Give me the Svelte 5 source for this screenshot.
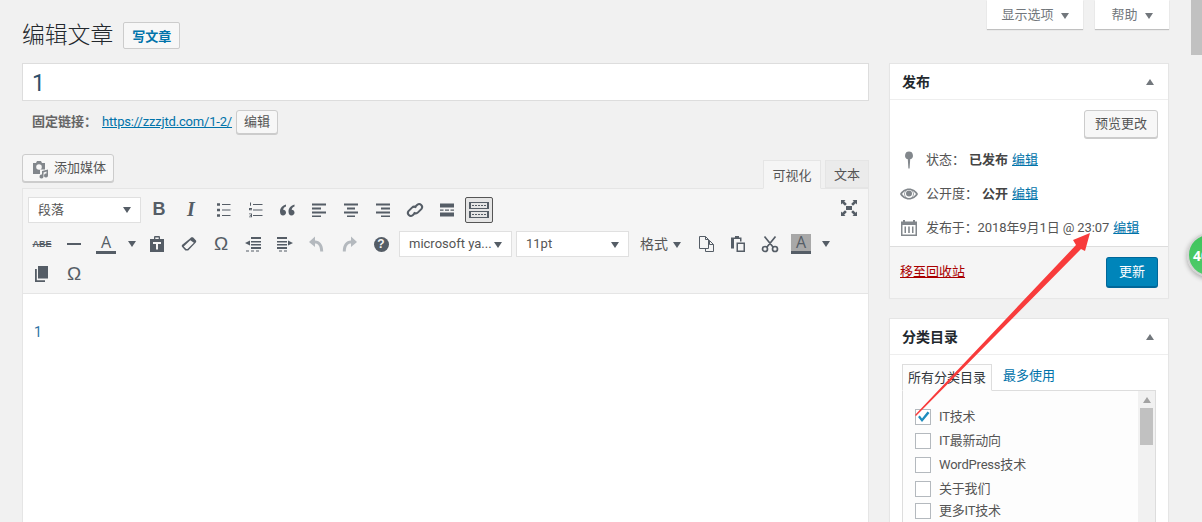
<script>
  const icons = {
    ul: { d: 'M4 3.300h3v2.400H4zM4 8.800h3v2.400H4zM4 14.300h3v2.400H4zM9 3.900h8.500v1.200H9zM9 9.400h8.500v1.200H9zM9 14.900h8.500v1.200H9z' },
    ol: { d: 'M5 2.500h1v3.200H5zM4 8h3v.9H5.100v.4H7v.9H4zM4 13.500h3v3.700H4v-.8h2v-.7H4.800v-.7H6v-.7H4zM8 3.900h9.500v1.200H8zM8 9.400h9.500v1.200H8zM8 14.900h9.500v1.200H8z' },
    quote: { d: 'M9 4.500C5.500 5.500 3 8 3 11.500 3 14 4.200 15.500 6 15.500s3-1.200 3-2.900-1.200-2.800-2.800-2.800c0-1.400 1.200-2.600 2.800-3.200zM17.500 4.500C14 5.500 11.500 8 11.500 11.500c0 2.500 1.200 4 3 4s3-1.200 3-2.900-1.200-2.800-2.800-2.800c0-1.400 1.200-2.600 2.800-3.200z' },
    alignleft: { d: 'M3 3.500h14v2H3zM3 7.500h9v2H3zM3 11.500h14v2H3zM3 15.500h9v1.500H3z' },
    aligncenter: { d: 'M3 3.500h14v2H3zM6 7.500h8v2H6zM3 11.500h14v2H3zM6 15.500h8v1.500H6z' },
    alignright: { d: 'M3 3.500h14v2H3zM8 7.500h9v2H8zM3 11.500h14v2H3zM8 15.500h9v1.500H8z' },
    link: { s: 'M10.500 6.500l1.800-1.800a3 3 0 0 1 4.200 4.200l-3.500 3.500a3 3 0 0 1-4.200 0M9.500 13.500l-1.800 1.800a3 3 0 0 1-4.200-4.200l3.500-3.500a3 3 0 0 1 4.200 0', w: 2 },
    more: { d: 'M3 3.500h14v4H3zM3 9.400h3.500v1.400H3zM8 9.400h4v1.400H8zM13.500 9.400H17v1.400h-3.500zM3 12.500h14v4H3z' },
    fullscreen: { d: 'M7 8h6v4H7zM2 2h4.500L5.200 3.300 7.800 6 6 7.800 3.300 5.200 2 6.500zM18 2v4.500l-1.300-1.300L14 7.800 12.200 6l2.600-2.700L13.500 2zM2 18v-4.500l1.300 1.300L6 12.200 7.800 14l-2.600 2.700L6.500 18zM18 18h-4.500l1.300-1.300L12.200 14l1.800-1.800 2.700 2.600 1.300-1.300z' },
    hr: { d: 'M3 9h14v2H3z' },
    pasteword: { d: 'M3 5h4V3.200C7 2.500 7.500 2 8.200 2h3.600c.7 0 1.200.5 1.200 1.200V5h4v13H3zM8.300 3.400v1.600h3.400V3.400zM6 8v2h3v5.500h2V10h3V8z', e: true },
    eraser: { d: 'M11 4.600l1-1c.6-.6 1.600-.6 2.200 0l2.600 2.600c.6.6.6 1.600 0 2.200L9.200 16.400H6.400L3.200 13c-.6-.6-.6-1.600 0-2.200zM11.300 6.300L4.700 12.400l2.500 2.600h1.300l6.400-6.300z', e: true },
    outdent: { d: 'M8 3h10v2H8zM8 7h10v1.400H8zM8 10h10v1.400H8zM8 13h10v2H8zM3 16.500h3v1H3zM8 16.500h3v1H8zM13 16.500h3v1h-3zM7 6.500v5l-5-2.500z' },
    indent: { d: 'M2 3h10v2H2zM2 7h10v1.400H2zM2 10h10v1.400H2zM2 13h10v2H2zM4 16.500h3v1H4zM9 16.500h3v1H9zM13 6.500v5l5-2.500z' },
    undo: { d: 'M8 2.500L2 8l6 5V9.500c3 0 5.200 2.500 5.200 8h3c0-7-3.200-11-8.200-11z', c: 'off' },
    redo: { d: 'M12 2.500L18 8l-6 5V9.500c-3 0-5.200 2.500-5.200 8h-3c0-7 3.200-11 8.200-11z', c: 'off' },
    copy: { s: 'M3.500 2.500h6l3 3v9h-9zM9.500 2.500v3h3M12.500 6.500h1l4 4v7h-8v-3M13.500 6.500v4h4', w: 1 },
    paste: { d: 'M7 2h4v1.500h2.500v4H12V5H6v9.500H3V3.500h4z M8.500 8.500H17V18H8.500zM10 10v6.500h5.500V10z', e: true },
    cut: { s: 'M7 13L15.500 2.500M13 13L4.500 2.500M7.500 15a2.500 2.500 0 1 1-5 0 2.500 2.500 0 0 1 5 0zM17.500 15a2.500 2.500 0 1 1-5 0 2.500 2.500 0 0 1 5 0z', w: 1.700 },
    clone: { d: 'M6 2h10v12.500H6zM3 5h1.800v11.200H13V18H3z' }
  }

  const row1 = ['B', 'I', 'ul', 'ol', 'quote', 'alignleft', 'aligncenter', 'alignright', 'link', 'more', 'sink']
  const row2a = ['ABE', 'hr', 'A', 'caret', 'pasteword', 'eraser', 'Ω', 'outdent', 'indent', 'undo', 'redo', 'help']
  const row2b = ['copy', 'paste', 'cut', 'Abg', 'caret']
  const row3 = ['clone', 'Ω']

  const keys = [4, 6.5, 9, 11.5, 14]
    .flatMap((x) => [5.2, 13.2].map((y) => `M${x} ${y}h1.600v1.600H${x}z`))
    .join('')

  const cats = [
    { name: 'IT技术', checked: true },
    { name: 'IT最新动向' },
    { name: 'WordPress技术' },
    { name: '关于我们' },
    { name: '更多IT技术', tight: true }
  ]
</script>

{#snippet svg(ic)}
  <svg viewBox="0 0 20 20" width="20" height="20" class={ic.c}>
    {#if ic.d}<path d={ic.d} fill-rule={ic.e ? 'evenodd' : 'nonzero'} />{/if}
    {#if ic.s}<path d={ic.s} class="st" stroke-width={ic.w} />{/if}
  </svg>
{/snippet}

{#snippet tool(n)}
  {#if n === 'caret'}
    <span class="slot narrow"><i class="caret"></i></span>
  {:else if n === 'B'}
    <span class="slot t-b">B</span>
  {:else if n === 'I'}
    <span class="slot t-i">I</span>
  {:else if n === 'ABE'}
    <span class="slot t-abe">ABE</span>
  {:else if n === 'A'}
    <span class="slot"><span class="t-a">A</span></span>
  {:else if n === 'Abg'}
    <span class="slot abg"><span class="t-a">A</span></span>
  {:else if n === 'Ω'}
    <span class="slot t-o">Ω</span>
  {:else if n === 'help'}
    <span class="slot"><span class="help">?</span></span>
  {:else if n === 'sink'}
    <span class="slot">
      <span class="sink">
        <svg viewBox="0 0 20 20" width="24" height="22" preserveAspectRatio="none" shape-rendering="crispEdges">
          <path d="M2.500 3.500h15v5h-15zM2.500 11.500h15v5h-15z" class="st" stroke-width="1" />
          <path d={keys} />
        </svg>
      </span>
    </span>
  {:else}
    <span class="slot">{@render svg(icons[n])}</span>
  {/if}
{/snippet}

<div class="page">
  <div class="main">
    <div class="heading">
      <h1>编辑文章</h1>
      <a class="add-new" href="#new">写文章</a>
    </div>

    <div class="title-input">1</div>

    <div class="permalink">
      <strong>固定链接：</strong>
      <a href="#url">https://zzzjtd.com/1-2/</a>
      <button class="btn small">编辑</button>
    </div>

    <div class="media-row">
      <button class="btn media">
        <svg viewBox="0 0 20 20" width="20" height="20">
          <path d="M3 4h3l1-2h4l1 2h3v6.500h-5V15H3zM9 5.200a2.800 2.800 0 1 0 0 5.600 2.800 2.800 0 0 0 0-5.600zM12 12l6-1.500v6a2 2 0 1 1-1.500-1.900V12.600l-3 .8v4.100a2 2 0 1 1-1.500-1.900z" fill-rule="evenodd" />
        </svg>
        添加媒体
      </button>
      <div class="tabs">
        <span class="tab active">可视化</span>
        <span class="tab">文本</span>
      </div>
    </div>

    <div class="editor">
      <div class="toolbar">
        <div class="row first">
          <div class="select para">段落<i class="caret"></i></div>
          {#each row1 as n}
            {@render tool(n)}
          {/each}
          <span class="full">{@render svg(icons.fullscreen)}</span>
        </div>
        <div class="row">
          {#each row2a as n}
            {@render tool(n)}
          {/each}
          <div class="select font">microsoft ya...<i class="caret"></i></div>
          <div class="select size">11pt<i class="caret"></i></div>
          <span class="format">格式<i class="caret"></i></span>
          {#each row2b as n}
            {@render tool(n)}
          {/each}
        </div>
        <div class="row">
          {#each row3 as n}
            {@render tool(n)}
          {/each}
        </div>
      </div>
      <div class="content">1</div>
    </div>
  </div>

  <div class="side">
    <div class="screen-tabs">
      <span class="screen-tab options">显示选项<i class="caret"></i></span>
      <span class="screen-tab help-tab">帮助<i class="caret"></i></span>
    </div>

    <section class="box publish">
      <header><h2>发布</h2><i class="caret up"></i></header>
      <div class="preview-row"><button class="btn preview">预览更改</button></div>
      <div class="meta">
        <svg viewBox="0 0 20 20" width="20" height="20"><path d="M10 1.500a4 4 0 0 1 1.200 7.800L10.600 18.500H9.400L8.800 9.300A4 4 0 0 1 10 1.500z" /></svg>
        <span>状态：</span><b class="gap">已发布</b> <a href="#e">编辑</a>
      </div>
      <div class="meta">
        <svg viewBox="0 0 20 20" width="20" height="20"><path d="M10 4.500c4 0 7.400 2.400 9 5.500-1.600 3.100-5 5.500-9 5.500S2.600 13.100 1 10c1.600-3.100 5-5.500 9-5.500zM10 6a4 4 0 1 0 0 8 4 4 0 0 0 0-8zM3 10c1 1.400 2.100 2.400 3.500 3.200C5.600 12.100 5.200 11 5.200 10s.4-2.100 1.300-3.200C5.100 7.600 4 8.600 3 10zm14 0c-1-1.400-2.100-2.400-3.500-3.200.9 1.100 1.300 2.200 1.300 3.200s-.4 2.100-1.300 3.200c1.400-.8 2.500-1.800 3.500-3.200z" fill-rule="evenodd" /><circle cx="10" cy="9.500" r="3" /></svg>
        <span>公开度：</span><b class="gap">公开</b> <a href="#e">编辑</a>
      </div>
      <div class="meta last">
        <svg viewBox="0 0 20 20" width="20" height="20"><path d="M2 3.500h2V2h2v1.500h8V2h2v1.500h2V18H2zM3.500 7v9.500h13V7zM5.500 8.500H7v6.500H5.500zM9.200 8.500h1.600v6.500H9.200zM13 8.500h1.500v6.500H13z" fill-rule="evenodd" /></svg>
        <span class="date">发布于：2018年9月1日 @ 23:07</span> <a href="#e">编辑</a>
      </div>
      <footer>
        <a class="trash" href="#t">移至回收站</a>
        <button class="update">更新</button>
      </footer>
    </section>

    <section class="box cats">
      <header><h2>分类目录</h2><i class="caret up"></i></header>
      <div class="cat-tabs">
        <span class="cat-tab active">所有分类目录</span>
        <a href="#p">最多使用</a>
      </div>
      <div class="cat-panel">
        <ul>
          {#each cats as c}
            <li class:tight={c.tight}>
              <span class="check">
                {#if c.checked}
                  <svg viewBox="0 0 16 16" width="16" height="16"><path d="M3 8l1.800-1.500L7 9.500 12.500 2.500 14.500 4 7 13z" /></svg>
                {/if}
              </span>
              {c.name}
            </li>
          {/each}
        </ul>
        <div class="scroll"><i class="caret up"></i><span></span></div>
      </div>
    </section>
  </div>

  <div class="page-thumb"></div>
  <div class="badge"><span>40</span></div>

  <svg class="arrow" viewBox="0 0 1202 522" width="1202" height="522">
    <polygon points="915,415 1076,245 1073,240 1090,233 1085,251 1081,249 916,416" />
  </svg>
</div>

<style>
  :global(body) {
    margin: 0;
    background: #f1f1f1;
  }

  .page {
    position: relative;
    display: flex;
    gap: 20px;
    box-sizing: border-box;
    width: 1202px;
    height: 522px;
    padding-left: 22px;
    overflow: hidden;
    background: #f1f1f1;
    color: #444;
    font: 13px/1.400 Roboto, "Noto Sans CJK SC", sans-serif;
  }

  a {
    color: #0073aa;
  }

  svg {
    display: block;
    fill: #555d66;
  }

  .st {
    fill: none;
    stroke: #555d66;
  }

  svg.off {
    fill: #b4b9be;
  }

  .main {
    width: 847px;
    flex: none;
  }

  .heading {
    display: flex;
    align-items: center;
    gap: 10px;
    height: 28px;
    margin-top: 22px;
  }

  h1 {
    margin: 0;
    font-size: 22.800px;
    font-weight: 300;
    line-height: 28px;
    color: #23282d;
  }

  .add-new {
    box-sizing: border-box;
    width: 57px;
    height: 27px;
    margin-top: -1px;
    border: 1px solid #ccc;
    border-radius: 2px;
    background: #f7f7f7;
    font-size: 13px;
    font-weight: 600;
    line-height: 27px;
    text-align: center;
    text-decoration: none;
  }

  .title-input {
    box-sizing: border-box;
    height: 38px;
    margin-top: 13px;
    padding-left: 9px;
    border: 1px solid #ddd;
    background: #fff;
    color: #2d4f6b;
    font-size: 23px;
    line-height: 39px;
  }

  .permalink {
    display: flex;
    align-items: center;
    height: 25px;
    margin-top: 8px;
    padding-left: 10px;
    color: #666;
  }

  .permalink strong {
    margin-right: 5px;
    padding-top: 2px;
    font-weight: 700;
  }

  .permalink a {
    padding-top: 2px;
    letter-spacing: -0.18px;
  }

  .btn {
    box-sizing: border-box;
    border: 1px solid #ccc;
    border-radius: 3px;
    box-shadow: 0 1px 0 #ccc;
    background: #f7f7f7;
    color: #555;
    font: inherit;
    padding: 1px 0 0;
  }

  .small {
    width: 42px;
    height: 24px;
    margin-left: 4px;
  }

  .media-row {
    display: flex;
    justify-content: space-between;
    align-items: flex-end;
    height: 34px;
    margin-top: 20px;
  }

  .media {
    display: flex;
    align-items: center;
    gap: 4px;
    align-self: flex-start;
    width: 92px;
    height: 28px;
    padding-left: 7px;
  }

  .media svg {
    fill: #82878c;
  }

  .tabs {
    display: flex;
    gap: 4px;
    margin-bottom: -1px;
    position: relative;
  }

  .tab {
    box-sizing: border-box;
    width: 44px;
    height: 28px;
    border: 1px solid #e5e5e5;
    border-bottom: 1px solid #e5e5e5;
    background: #ebebeb;
    color: #555;
    line-height: 28px;
    text-align: center;
  }

  .tab.active {
    width: 58px;
    height: 29px;
    border-bottom-color: #f5f5f5;
    background: #f5f5f5;
    line-height: 30px;
  }

  .editor {
    height: 400px;
    border: 1px solid #e5e5e5;
    background: #fff;
  }

  .toolbar {
    box-sizing: border-box;
    height: 105px;
    padding: 7px 3px 0;
    border-bottom: 1px solid #e5e5e5;
    background: #f5f5f5;
  }

  .content {
    padding: 29px 11px 0;
    color: #2f74a5;
    font-size: 14px;
    line-height: 18px;
  }

  .row {
    display: flex;
    align-items: center;
    height: 30px;
  }

  .row.first {
    height: 27px;
    margin-bottom: 6px;
  }

  .slot {
    display: flex;
    flex: none;
    align-items: center;
    justify-content: center;
    width: 32px;
    height: 28px;
    color: #555d66;
  }

  .slot.narrow {
    width: 19px;
  }

  .t-b {
    font: 700 18px "Liberation Sans", sans-serif;
  }

  .t-i {
    font: italic 700 20px "Liberation Serif", serif;
  }

  .t-abe {
    font: 700 9px "Liberation Sans", sans-serif;
    text-decoration: line-through;
  }

  .t-a {
    display: block;
    width: 20px;
    border-bottom: 3px solid #555d66;
    font: 16px/17px "Open Sans", sans-serif;
    text-align: center;
  }

  .t-o {
    font: 19px "Liberation Sans", sans-serif;
  }

  .abg {
    width: 30px;
  }

  .abg .t-a {
    height: 17px;
    background: #a8a8a8;
  }

  .help {
    width: 15px;
    height: 15px;
    border-radius: 50%;
    background: #555d66;
    color: #f5f5f5;
    font: 700 12px/15px "Liberation Sans", sans-serif;
    text-align: center;
  }

  .sink {
    display: flex;
    align-items: center;
    justify-content: center;
    box-sizing: border-box;
    width: 28px;
    height: 26px;
    border: 1px solid #555;
    border-radius: 2px;
    background: #e5e5e5;
  }

  .full {
    margin-left: auto;
    margin-right: 6px;
    margin-top: -4px;
  }

  .caret {
    display: inline-block;
    border-top: 6px solid #555d66;
    border-left: 4px solid transparent;
    border-right: 4px solid transparent;
  }

  .caret.up {
    border-top: 0;
    border-bottom: 6px solid #72777c;
  }

  .select {
    display: flex;
    flex: none;
    align-items: center;
    justify-content: space-between;
    box-sizing: border-box;
    height: 26px;
    padding: 1px 9px 0 9px;
    border: 1px solid #e0e0e0;
    background: #fff;
    color: #555;
    white-space: nowrap;
  }

  .para {
    width: 113px;
    margin-left: 2px;
    margin-right: 2px;
  }

  .font {
    width: 113px;
    margin-left: 2px;
  }

  .size {
    width: 113px;
    margin-left: 4px;
  }

  .format {
    display: flex;
    flex: none;
    align-items: center;
    gap: 5px;
    width: 50px;
    padding: 1px 0 0 11px;
    color: #555;
    font-size: 14px;
  }

  .side {
    width: 280px;
    flex: none;
  }

  .screen-tabs {
    display: flex;
    justify-content: flex-end;
    gap: 12px;
    height: 63px;
  }

  .screen-tab {
    display: flex;
    align-items: center;
    justify-content: center;
    gap: 7px;
    box-sizing: border-box;
    height: 29px;
    padding-top: 2px;
    background: #fff;
    box-shadow: 0 1px 1px rgba(0, 0, 0, 0.2);
    color: #72777c;
  }

  .options {
    width: 96px;
  }

  .help-tab {
    width: 74px;
  }

  .screen-tab .caret {
    border-top-color: #72777c;
  }

  .box {
    box-sizing: border-box;
    margin-bottom: 20px;
    border: 1px solid #e5e5e5;
    box-shadow: 0 1px 1px rgba(0, 0, 0, 0.04);
    background: #fff;
  }

  header {
    display: flex;
    align-items: center;
    justify-content: space-between;
    box-sizing: border-box;
    height: 36px;
    padding: 1px 14px 0 12px;
    border-bottom: 1px solid #eee;
  }

  h2 {
    margin: 0;
    padding-top: 1px;
    color: #23282d;
    font-size: 14px;
    font-weight: 700;
  }

  .publish {
    height: 235px;
  }

  .preview-row {
    display: flex;
    justify-content: flex-end;
    padding: 10px 10px 0;
  }

  .preview {
    width: 74px;
    height: 28px;
  }

  .meta {
    display: flex;
    align-items: center;
    gap: 4px;
    box-sizing: border-box;
    height: 34px;
    padding: 2px 0 0 9px;
    color: #555;
    white-space: nowrap;
  }

  .meta:nth-child(3) {
    margin-top: 4px;
  }

  .meta svg {
    margin-right: 3px;
    fill: #82878c;
  }

  .meta b {
    color: #444;
  }

  .date {
    letter-spacing: -0.1px;
  }

  footer {
    display: flex;
    align-items: center;
    justify-content: space-between;
    box-sizing: border-box;
    height: 52px;
    margin-top: 2px;
    padding: 0 10px;
    border-top: 1px solid #ddd;
    background: #f5f5f5;
  }

  .trash {
    color: #a00;
  }

  .update {
    width: 52px;
    height: 31px;
    border: 1px solid #006799;
    border-bottom-width: 2px;
    border-radius: 3px;
    background: #0085ba;
    color: #fff;
    font: inherit;
    padding: 0;
  }

  .cats {
    height: 300px;
  }

  .cat-tabs {
    display: flex;
    align-items: flex-end;
    gap: 11px;
    height: 26px;
    margin: 9px 12px 0;
  }

  .cat-tabs a {
    margin-bottom: 5px;
    text-decoration: none;
  }

  .cat-tab {
    box-sizing: border-box;
    width: 90px;
    height: 27px;
    margin-bottom: -1px;
    position: relative;
    border: 1px solid #ddd;
    border-bottom-color: #fdfdfd;
    background: #fdfdfd;
    line-height: 25px;
    text-align: center;
    color: #32373c;
  }

  .cat-panel {
    display: flex;
    justify-content: space-between;
    height: 200px;
    margin: 0 12px;
    border: 1px solid #ddd;
    background: #fdfdfd;
  }

  ul {
    margin: 0;
    padding: 18px 0 0 12px;
    list-style: none;
  }

  li {
    display: flex;
    align-items: center;
    gap: 8px;
    height: 16px;
    margin-bottom: 8px;
    color: #555;
    letter-spacing: -0.2px;
    white-space: nowrap;
  }

  li:nth-child(4) {
    margin-bottom: 6px;
  }

  .check {
    box-sizing: border-box;
    width: 16px;
    height: 16px;
    flex: none;
    border: 1px solid #b4b9be;
    background: #fff;
  }

  .check svg {
    margin: -1px;
    fill: #1e8cbe;
  }

  .scroll {
    display: flex;
    flex-direction: column;
    align-items: center;
    width: 17px;
    background: #f1f1f1;
  }

  .scroll .caret {
    margin-top: 6px;
    margin-bottom: 5px;
    border-bottom-color: #a3a3a3;
  }

  .scroll span {
    width: 13px;
    height: 37px;
    background: #c1c1c1;
  }

  .page-thumb {
    position: absolute;
    top: 0;
    right: 0;
    width: 11px;
    height: 55px;
    background: #c1c1c1;
  }

  .badge {
    position: absolute;
    top: 233px;
    left: 1187px;
    display: flex;
    align-items: center;
    box-sizing: border-box;
    width: 44px;
    height: 44px;
    padding-left: 4px;
    border: 2px solid #d4d4d4;
    border-radius: 50%;
    box-shadow: 0 2px 5px rgba(0, 0, 0, 0.3);
    background: linear-gradient(#3fc45c, #4fcb6a);
    color: #fff;
    font: 700 14px "Open Sans", sans-serif;
  }

  .arrow {
    position: absolute;
    top: 0;
    left: 0;
    fill: #f83b3b;
    pointer-events: none;
  }
</style>
